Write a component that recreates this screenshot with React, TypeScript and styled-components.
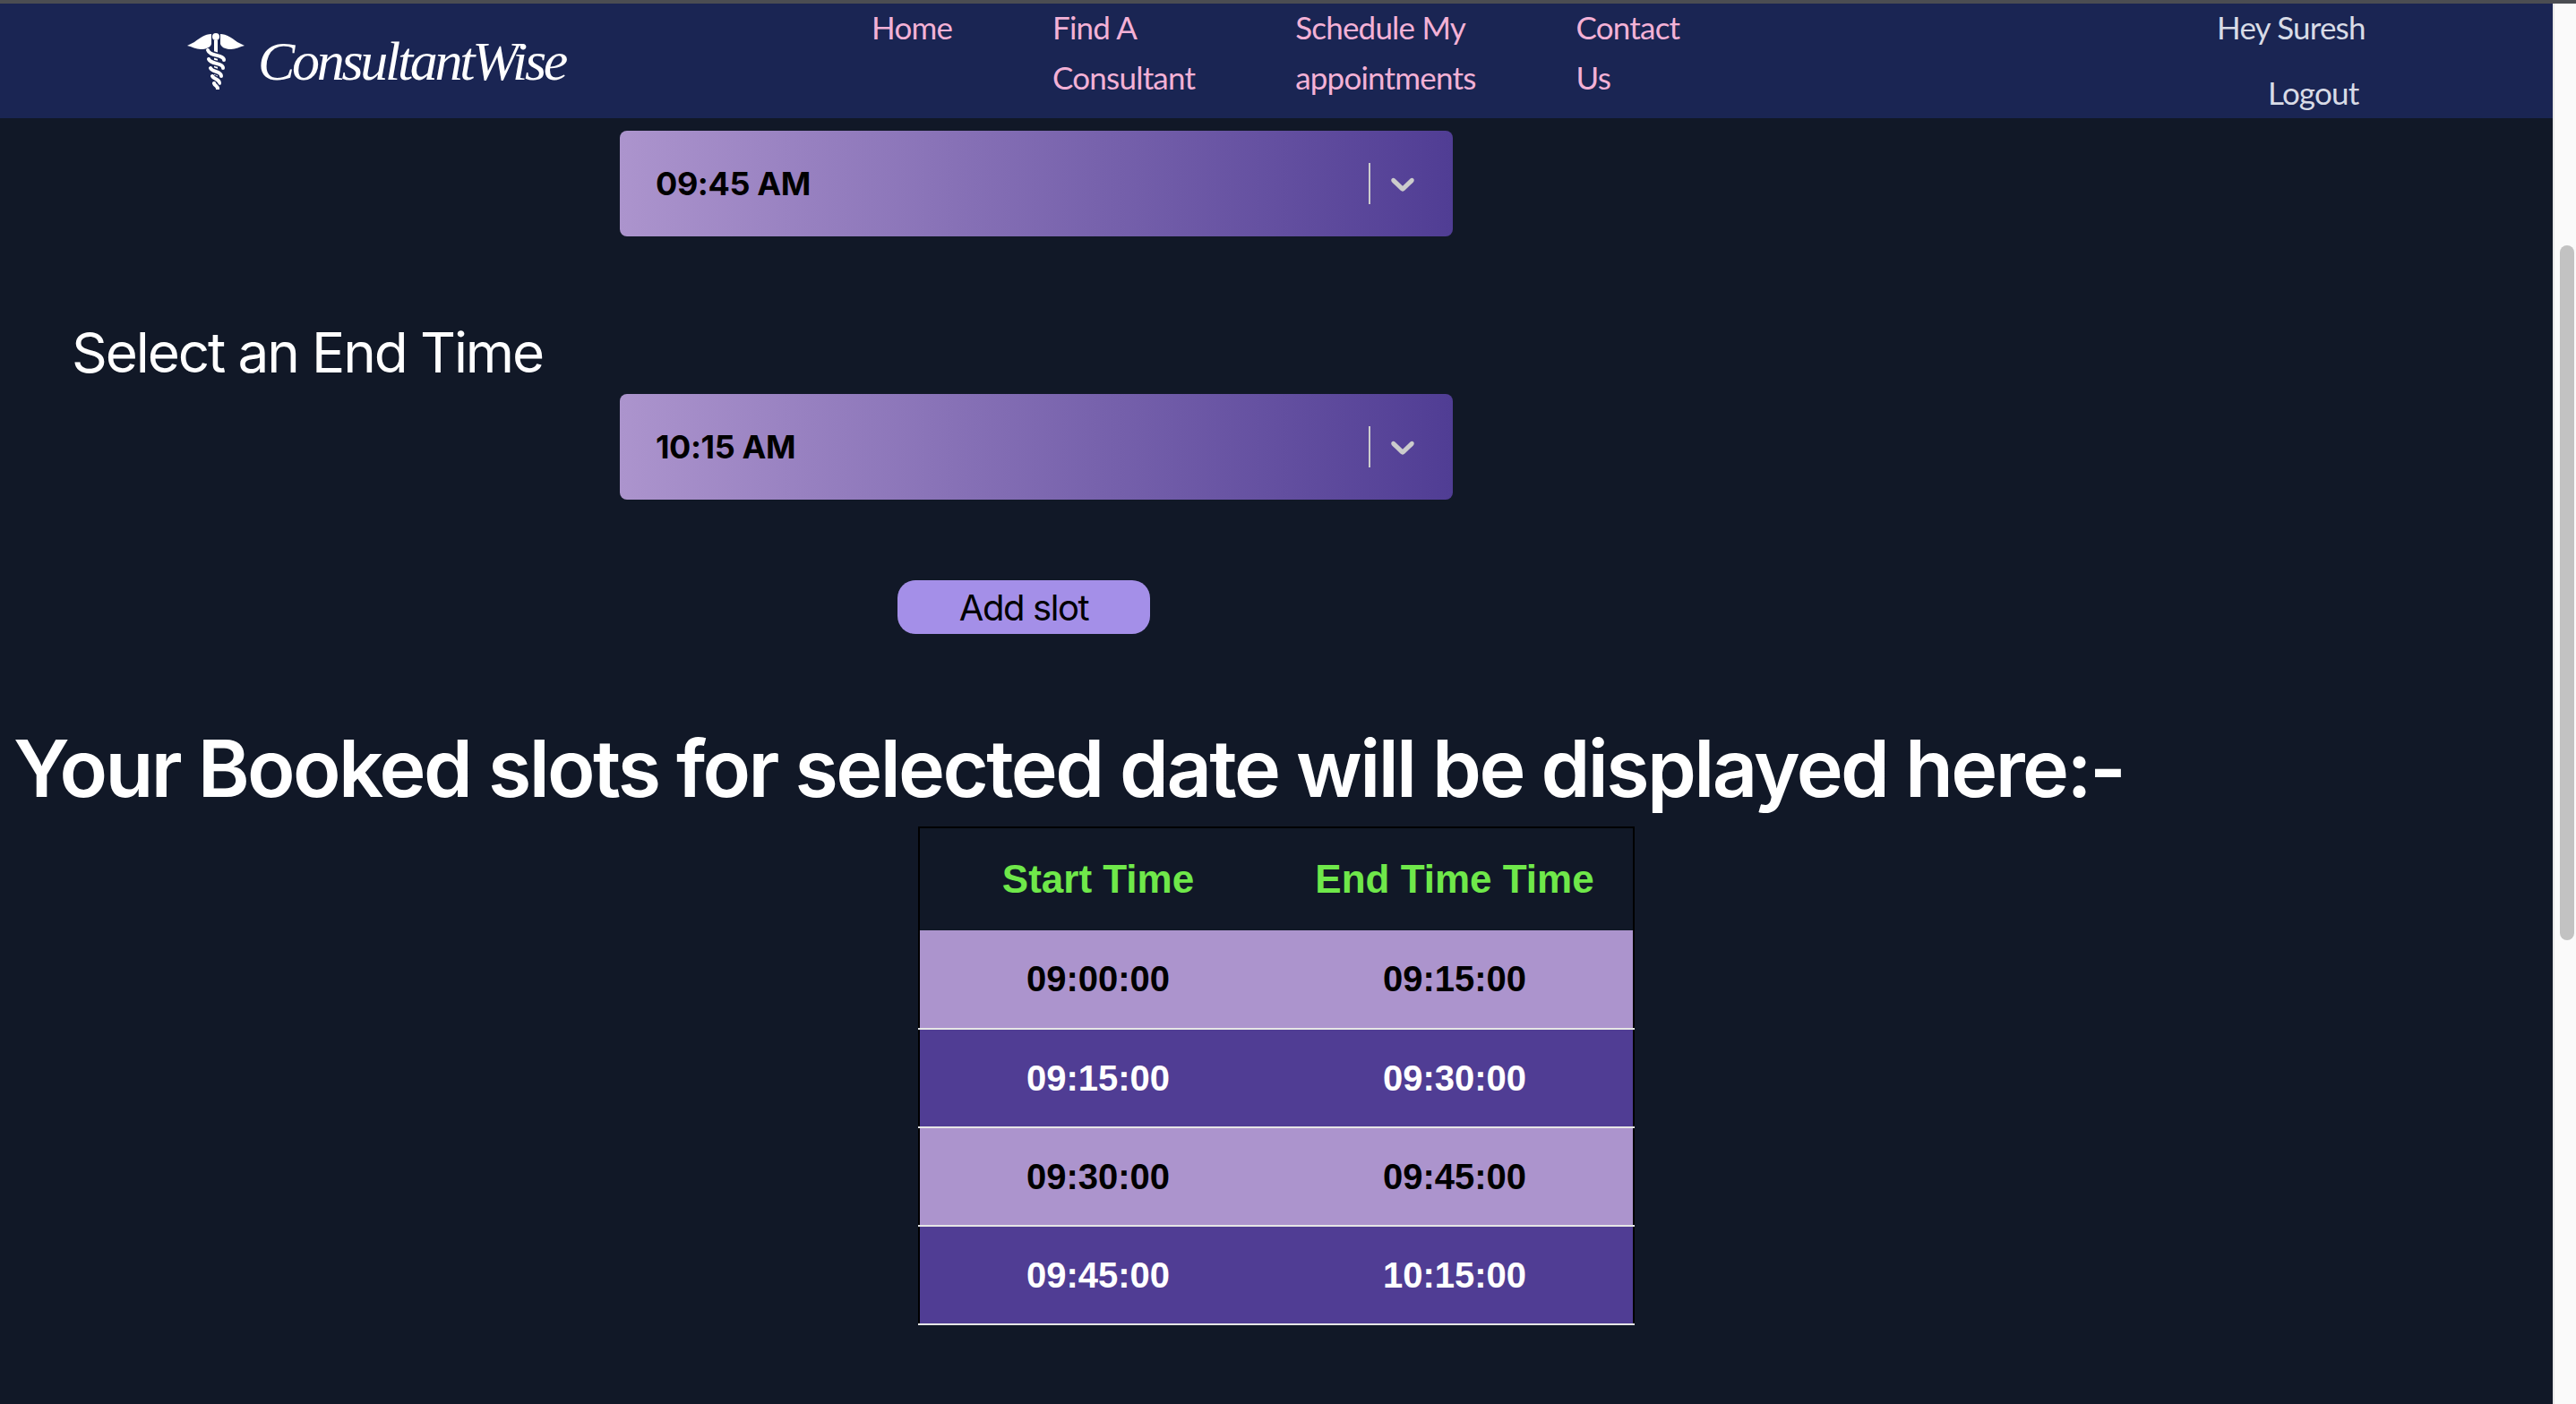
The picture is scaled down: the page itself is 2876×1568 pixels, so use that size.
import React from "react";
import styled, { createGlobalStyle } from "styled-components";

const GlobalStyle = createGlobalStyle`
  html, body {
    margin: 0;
    padding: 0;
    height: 100%;
    overflow: hidden;
    background: #111827;
  }
  * {
    box-sizing: border-box;
  }
`;

const Shell = styled.div`
  height: 1568px;
  display: flex;
  flex-direction: column;
`;

const WindowEdge = styled.div`
  height: 4px;
  flex: none;
  background: #4b4d52;
`;

const Viewport = styled.div`
  flex: 1;
  display: flex;
  min-height: 0;
`;

const Page = styled.div`
  flex: 1;
  min-width: 0;
  background: #111827;
  font-family: Inter, sans-serif;
  color: #fff;
`;

const ScrollTrack = styled.div`
  width: 26px;
  flex: none;
  background: #fafafa;
  border-left: 2px solid #e8e8e8;
  padding: 270px 2px 0 6px;
`;

const ScrollThumb = styled.div`
  height: 776px;
  border-radius: 8px;
  background: #c2c2c2;
`;

const NavBar = styled.nav`
  height: 128px;
  background: #1a2553;
  display: flex;
  align-items: flex-start;
  padding-left: 209px;
`;

const Brand = styled.div`
  width: 764px;
  flex: none;
  display: flex;
  align-items: flex-start;
  gap: 15px;
  padding-top: 32px;
`;

const BrandName = styled.span`
  font-family: "Liberation Serif", serif;
  font-style: italic;
  font-size: 62px;
  line-height: 60px;
  letter-spacing: -3.3px;
  color: #fff;
  margin-top: 2px;
`;

const NavLinks = styled.ul`
  list-style: none;
  margin: -2px 0 0;
  padding: 0;
  display: flex;
  gap: 112px;
`;

const NavLink = styled.li`
  font-family: Lato, sans-serif;
  font-size: 35px;
  line-height: 56px;
  letter-spacing: -0.8px;
  color: #f3b1d6;
  white-space: nowrap;
`;

const Account = styled.div`
  margin: -2px 0 0 auto;
  width: 375px;
  flex: none;
  font-family: Lato, sans-serif;
  font-size: 35px;
  letter-spacing: -0.8px;
  color: #d8dbe6;
`;

const Greeting = styled.div`
  line-height: 56px;
`;

const Logout = styled.div`
  line-height: 56px;
  margin: 17px 0 0 57px;
`;

const TimeSelect = styled.div`
  height: 118px;
  width: 930px;
  margin-left: 692px;
  padding-left: 40px;
  border-radius: 8px;
  background: linear-gradient(90deg, #ac94cd 0%, #503d94 100%);
  display: flex;
  align-items: center;
  justify-content: space-between;
`;

const FirstSelect = styled(TimeSelect)`
  margin-top: 14px;
`;

const SelectValue = styled.span`
  font-weight: 700;
  font-size: 36px;
  letter-spacing: -0.4px;
  color: #000;
`;

const SelectIndicators = styled.div`
  display: flex;
  align-items: center;
  gap: 14px;
  padding-right: 34px;
  color: #ccc;
`;

const IndicatorLine = styled.span`
  width: 2px;
  height: 46px;
  background: #ccc;
`;

const FieldLabel = styled.h2`
  margin: 94px 0 10px 80px;
  font-size: 62px;
  line-height: 72px;
  font-weight: 400;
  letter-spacing: -2.1px;
`;

const AddSlot = styled.button`
  display: block;
  width: 282px;
  height: 60px;
  margin: 90px 0 0 1002px;
  padding: 0;
  border: none;
  border-radius: 20px;
  background: #a48fe8;
  color: #000;
  font-family: Inter, sans-serif;
  font-size: 40px;
  letter-spacing: -1.4px;
`;

const Heading = styled.h1`
  margin: 100px 0 15px 15px;
  font-size: 88px;
  line-height: 100px;
  font-weight: 600;
  letter-spacing: -2.6px;
  white-space: nowrap;
`;

const SlotTable = styled.table`
  width: 800px;
  margin-left: 1025px;
  border-collapse: collapse;
  table-layout: fixed;
  border: 2px solid #000;
  font-family: "Liberation Sans", Arial, sans-serif;
  text-align: center;
`;

const HeadCell = styled.th`
  height: 115px;
  padding: 0;
  font-size: 44px;
  font-weight: 700;
  color: #6fe84a;
`;

const SlotRow = styled.tr<{ $dark: boolean }>`
  background: ${({ $dark }) => ($dark ? "#503d94" : "#ac94cd")};
  color: ${({ $dark }) => ($dark ? "#fff" : "#000")};
`;

const SlotCell = styled.td`
  height: 110px;
  padding: 0;
  font-size: 40px;
  font-weight: 700;
  border-bottom: 2px solid #e6e6e6;
`;

const slots = [
  ["09:00:00", "09:15:00"],
  ["09:15:00", "09:30:00"],
  ["09:30:00", "09:45:00"],
  ["09:45:00", "10:15:00"],
];

const ropeBands = [
  "M23 20C25 27 41 25 41 31",
  "M24 30C26 36 40 34 40 40",
  "M26 40C28 45 38 43 38 49",
  "M28 49C30 53 36 52 36 57",
  "M30 57C31 60 34 60 34 63",
];

function Caduceus() {
  return (
    <svg width="64" height="64" viewBox="0 0 64 64" fill="none">
      <path
        d="M27 2C20 2 13 7 8 11 L0 15 C5 16 10 19 15 19 C21 19 26 17 27 13Z"
        fill="#fff"
      />
      <path
        d="M37 2C44 2 51 7 56 11 L64 15 C59 16 54 19 49 19 C43 19 38 17 37 13Z"
        fill="#fff"
      />
      <circle cx="32" cy="5" r="4" fill="#fff" />
      <path d="M32 9V62" stroke="#fff" strokeWidth="4" />
      {ropeBands.map((d) => (
        <g key={d}>
          <path d={d} stroke="#1a2553" strokeWidth="7" />
          <path d={d} stroke="#fff" strokeWidth="4" strokeLinecap="round" />
        </g>
      ))}
    </svg>
  );
}

function SelectBox({ value, first }: { value: string; first?: boolean }) {
  const Box = first ? FirstSelect : TimeSelect;
  return (
    <Box>
      <SelectValue>{value}</SelectValue>
      <SelectIndicators>
        <IndicatorLine />
        <svg width="44" height="44" viewBox="0 0 20 20" fill="currentColor">
          <path d="M4.516 7.548c0.436-0.446 1.043-0.481 1.576 0l3.908 3.747 3.908-3.747c0.533-0.481 1.141-0.446 1.574 0 0.436 0.445 0.408 1.197 0 1.615-0.406 0.418-4.695 4.502-4.695 4.502-0.217 0.223-0.502 0.335-0.787 0.335s-0.57-0.112-0.789-0.335c0 0-4.287-4.084-4.695-4.502s-0.436-1.17 0-1.615z" />
        </svg>
      </SelectIndicators>
    </Box>
  );
}

export default function App() {
  return (
    <Shell>
      <GlobalStyle />
      <WindowEdge />
      <Viewport>
        <Page>
          <NavBar>
            <Brand>
              <Caduceus />
              <BrandName>ConsultantWise</BrandName>
            </Brand>
            <NavLinks>
              <NavLink>Home</NavLink>
              <NavLink>
                Find A<br />
                Consultant
              </NavLink>
              <NavLink>
                Schedule My
                <br />
                appointments
              </NavLink>
              <NavLink>
                Contact
                <br />
                Us
              </NavLink>
            </NavLinks>
            <Account>
              <Greeting>Hey Suresh</Greeting>
              <Logout>Logout</Logout>
            </Account>
          </NavBar>

          <SelectBox value="09:45 AM" first />

          <FieldLabel>Select an End Time</FieldLabel>
          <SelectBox value="10:15 AM" />

          <AddSlot>Add slot</AddSlot>

          <Heading>Your Booked slots for selected date will be displayed here:-</Heading>

          <SlotTable>
            <thead>
              <tr>
                <HeadCell>Start Time</HeadCell>
                <HeadCell>End Time Time</HeadCell>
              </tr>
            </thead>
            <tbody>
              {slots.map(([start, end], i) => (
                <SlotRow key={start} $dark={i % 2 === 1}>
                  <SlotCell>{start}</SlotCell>
                  <SlotCell>{end}</SlotCell>
                </SlotRow>
              ))}
            </tbody>
          </SlotTable>
        </Page>
        <ScrollTrack>
          <ScrollThumb />
        </ScrollTrack>
      </Viewport>
    </Shell>
  );
}
